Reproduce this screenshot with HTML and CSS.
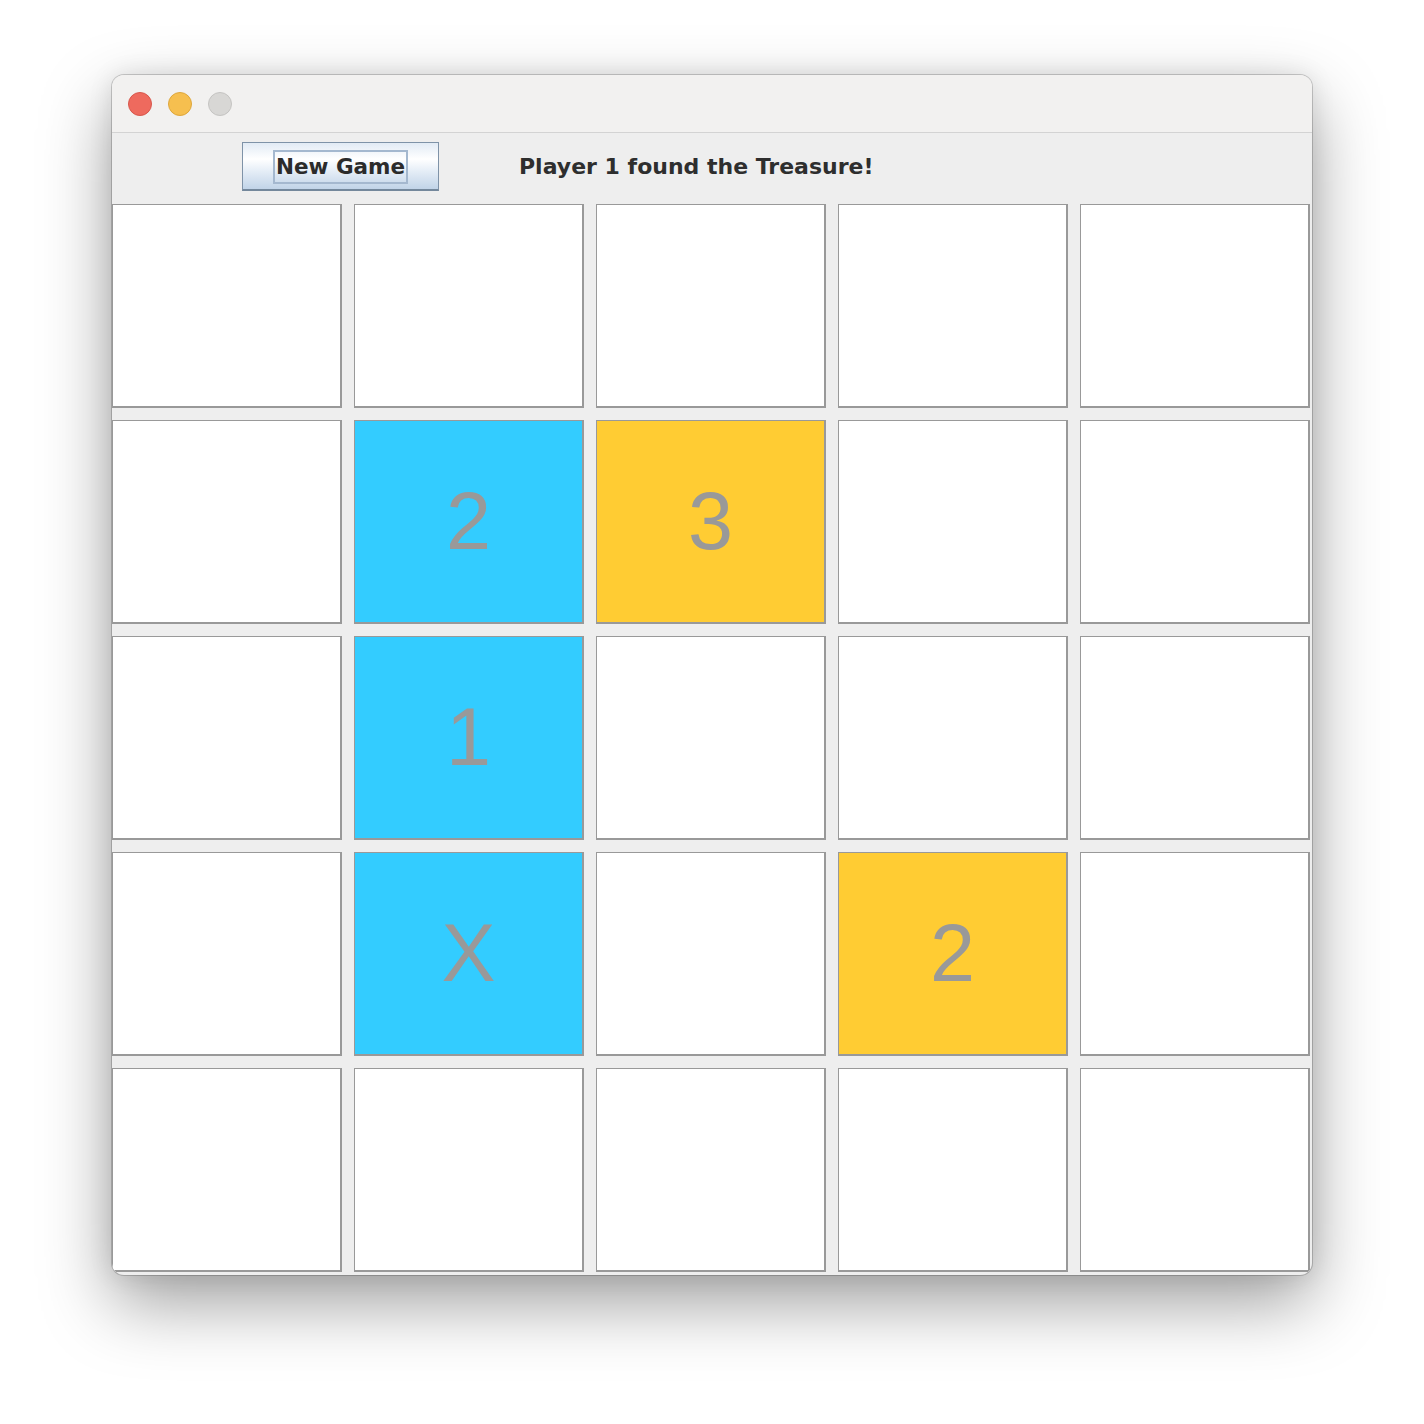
FILE: index.html
```html
<!DOCTYPE html>
<html>
<head>
<meta charset="utf-8">
<link rel="stylesheet" href="styles.css">
</head>
<body>
<div class="window">
  <div class="titlebar">
    <span class="light red"></span>
    <span class="light yellow"></span>
    <span class="light gray"></span>
  </div>
  <div class="toolbar">
    <button class="btn"><span class="focus">New Game</span></button>
    <span class="status">Player 1 found the Treasure!</span>
  </div>
  <div class="grid">
    <div class="cell"></div><div class="cell"></div><div class="cell"></div><div class="cell"></div><div class="cell"></div>
    <div class="cell"></div><div class="cell blue">2</div><div class="cell yellow">3</div><div class="cell"></div><div class="cell"></div>
    <div class="cell"></div><div class="cell blue">1</div><div class="cell"></div><div class="cell"></div><div class="cell"></div>
    <div class="cell"></div><div class="cell blue">X</div><div class="cell"></div><div class="cell yellow">2</div><div class="cell"></div>
    <div class="cell"></div><div class="cell"></div><div class="cell"></div><div class="cell"></div><div class="cell"></div>
  </div>
</div>
</body>
</html>
```

FILE: styles.css
```css
html, body {
  margin: 0;
  padding: 0;
  background: #ffffff;
}
body {
  padding-top: 75px;
  min-height: 1424px;
  box-sizing: border-box;
  font-family: "DejaVu Sans", "Liberation Sans", sans-serif;
}
.window {
  width: 1200px;
  height: 1200px;
  margin: 0 auto;
  border-radius: 12px;
  overflow: hidden;
  background: #eeeeee;
  box-shadow: 0 0 0 1px rgba(0,0,0,0.18), 0 28px 70px rgba(0,0,0,0.38), 0 0 24px rgba(0,0,0,0.10);
  display: flex;
  flex-direction: column;
}
.titlebar {
  height: 57px;
  background: #f2f1f0;
  border-bottom: 1px solid #d3d3d3;
  display: flex;
  align-items: center;
  padding-left: 16px;
  gap: 16px;
  flex-shrink: 0;
}
.light {
  width: 24px;
  height: 24px;
  border-radius: 50%;
  box-sizing: border-box;
}
.light.red { background: #ee6a5e; border: 1px solid #d8574c; }
.light.yellow { background: #f6bf4f; border: 1px solid #dea73c; }
.light.gray { background: #d8d7d5; border: 1px solid #c5c4c2; }
.toolbar {
  height: 71px;
  display: flex;
  align-items: flex-start;
  padding-left: 130px;
  flex-shrink: 0;
}
.btn {
  margin-top: 9px;
  width: 197px;
  height: 49px;
  box-sizing: border-box;
  border: 1px solid #7f93a8;
  border-bottom: 2px solid #74889c;
  background: linear-gradient(to bottom, #e2ebf5 0%, #ffffff 35%, #e6eef7 60%, #c1d4e8 100%);
  display: flex;
  align-items: center;
  justify-content: center;
  padding: 2px 0 0 0;
  font-family: "DejaVu Sans", sans-serif;
  font-weight: bold;
  font-size: 21.5px;
  color: #2b2b2b;
}
.focus {
  border: 2px solid #a4b8cf;
  padding: 0 1px;
  line-height: 30px;
}
.status {
  margin-left: 80px;
  margin-top: 21px;
  font-weight: bold;
  font-size: 22px;
  color: #2e2e2e;
}
.grid {
  display: grid;
  grid-template-columns: repeat(5, 230px);
  grid-template-rows: repeat(5, 204px);
  gap: 12px;
}
.cell {
  box-sizing: border-box;
  background: #ffffff;
  border: 1px solid #999999;
  border-right-width: 2px;
  border-bottom-width: 2px;
  display: flex;
  align-items: center;
  justify-content: center;
  font-family: "Liberation Sans", Arial, sans-serif;
  font-size: 81px;
  color: #999999;
}
.cell.blue { background: #33ccff; }
.cell.yellow { background: #ffcc33; }
```
